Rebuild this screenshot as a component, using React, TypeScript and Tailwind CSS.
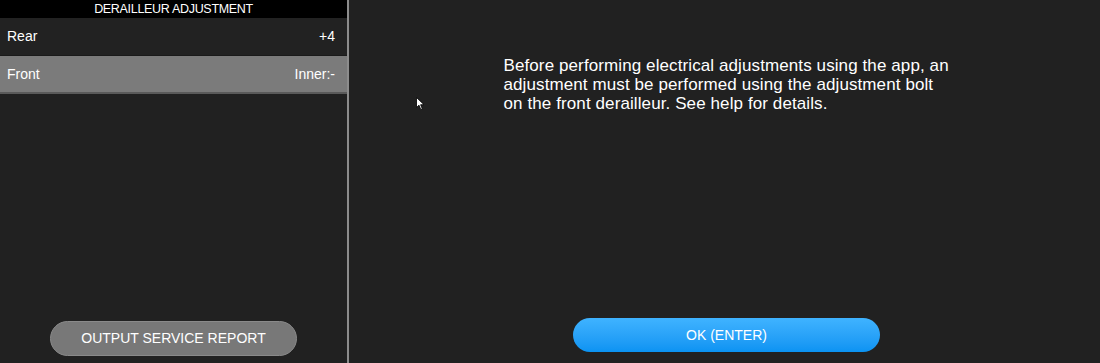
import React from "react";

const rows = [
  { label: "Rear", value: "+4", active: false },
  { label: "Front", value: "Inner:-", active: true },
];

export default function App() {
  return (
    <div
      className="relative flex h-[363px] w-[1100px] overflow-hidden bg-[#212121] text-white"
      style={{ fontFamily: '"Liberation Sans", Arial, sans-serif' }}
    >
      <aside className="flex w-[347px] flex-col">
        <div className="flex h-[18px] items-center justify-center bg-black text-[12.5px] tracking-tight text-white">
          DERAILLEUR ADJUSTMENT
        </div>
        {rows.map((r) => (
          <div
            key={r.label}
            className={
              r.active
                ? "flex h-[38px] items-center justify-between border-b-2 border-[#5a5a5a] bg-[#7b7b7b] pl-[7px] pr-[12px] text-[14px]"
                : "flex h-[38px] items-center justify-between border-b border-[#1a1a1a] bg-[#222222] pl-[7px] pr-[12px] text-[14px]"
            }
          >
            <span>{r.label}</span>
            <span>{r.value}</span>
          </div>
        ))}
        <div className="flex-1" />
        <div className="flex justify-center pb-[7px]">
          <button className="h-[35px] w-[247px] rounded-full border border-[#8a8a8a] bg-[#787878] text-[14px] text-white">
            OUTPUT SERVICE REPORT
          </button>
        </div>
      </aside>
      <div className="w-[2px] bg-[#8c8c8c]" />
      <main className="flex flex-1 flex-col items-center pt-[56px]">
        <p className="ml-[7px] w-[449px] text-[17px] leading-[19px] tracking-[0.1px]">
          Before performing electrical adjustments using the app, an
          adjustment must be performed using the adjustment bolt on the front
          derailleur. See help for details.
        </p>
        <div className="flex-1" />
        <button className="mb-[11px] ml-[4px] h-[34px] w-[307px] rounded-full bg-gradient-to-b from-[#3fb3ff] to-[#0a93f2] text-[14px] text-white">
          OK (ENTER)
        </button>
      </main>
      <svg
        className="absolute left-[416px] top-[97px]"
        width="9"
        height="14"
        viewBox="0 0 9 14"
      >
        <path d="M0.5 0.5 L0.5 10.5 L3 8.2 L4.8 12.5 L6.3 11.8 L4.6 7.7 L8 7.7 Z" fill="#fff" stroke="#000" strokeWidth="0.8" />
      </svg>
    </div>
  );
}
